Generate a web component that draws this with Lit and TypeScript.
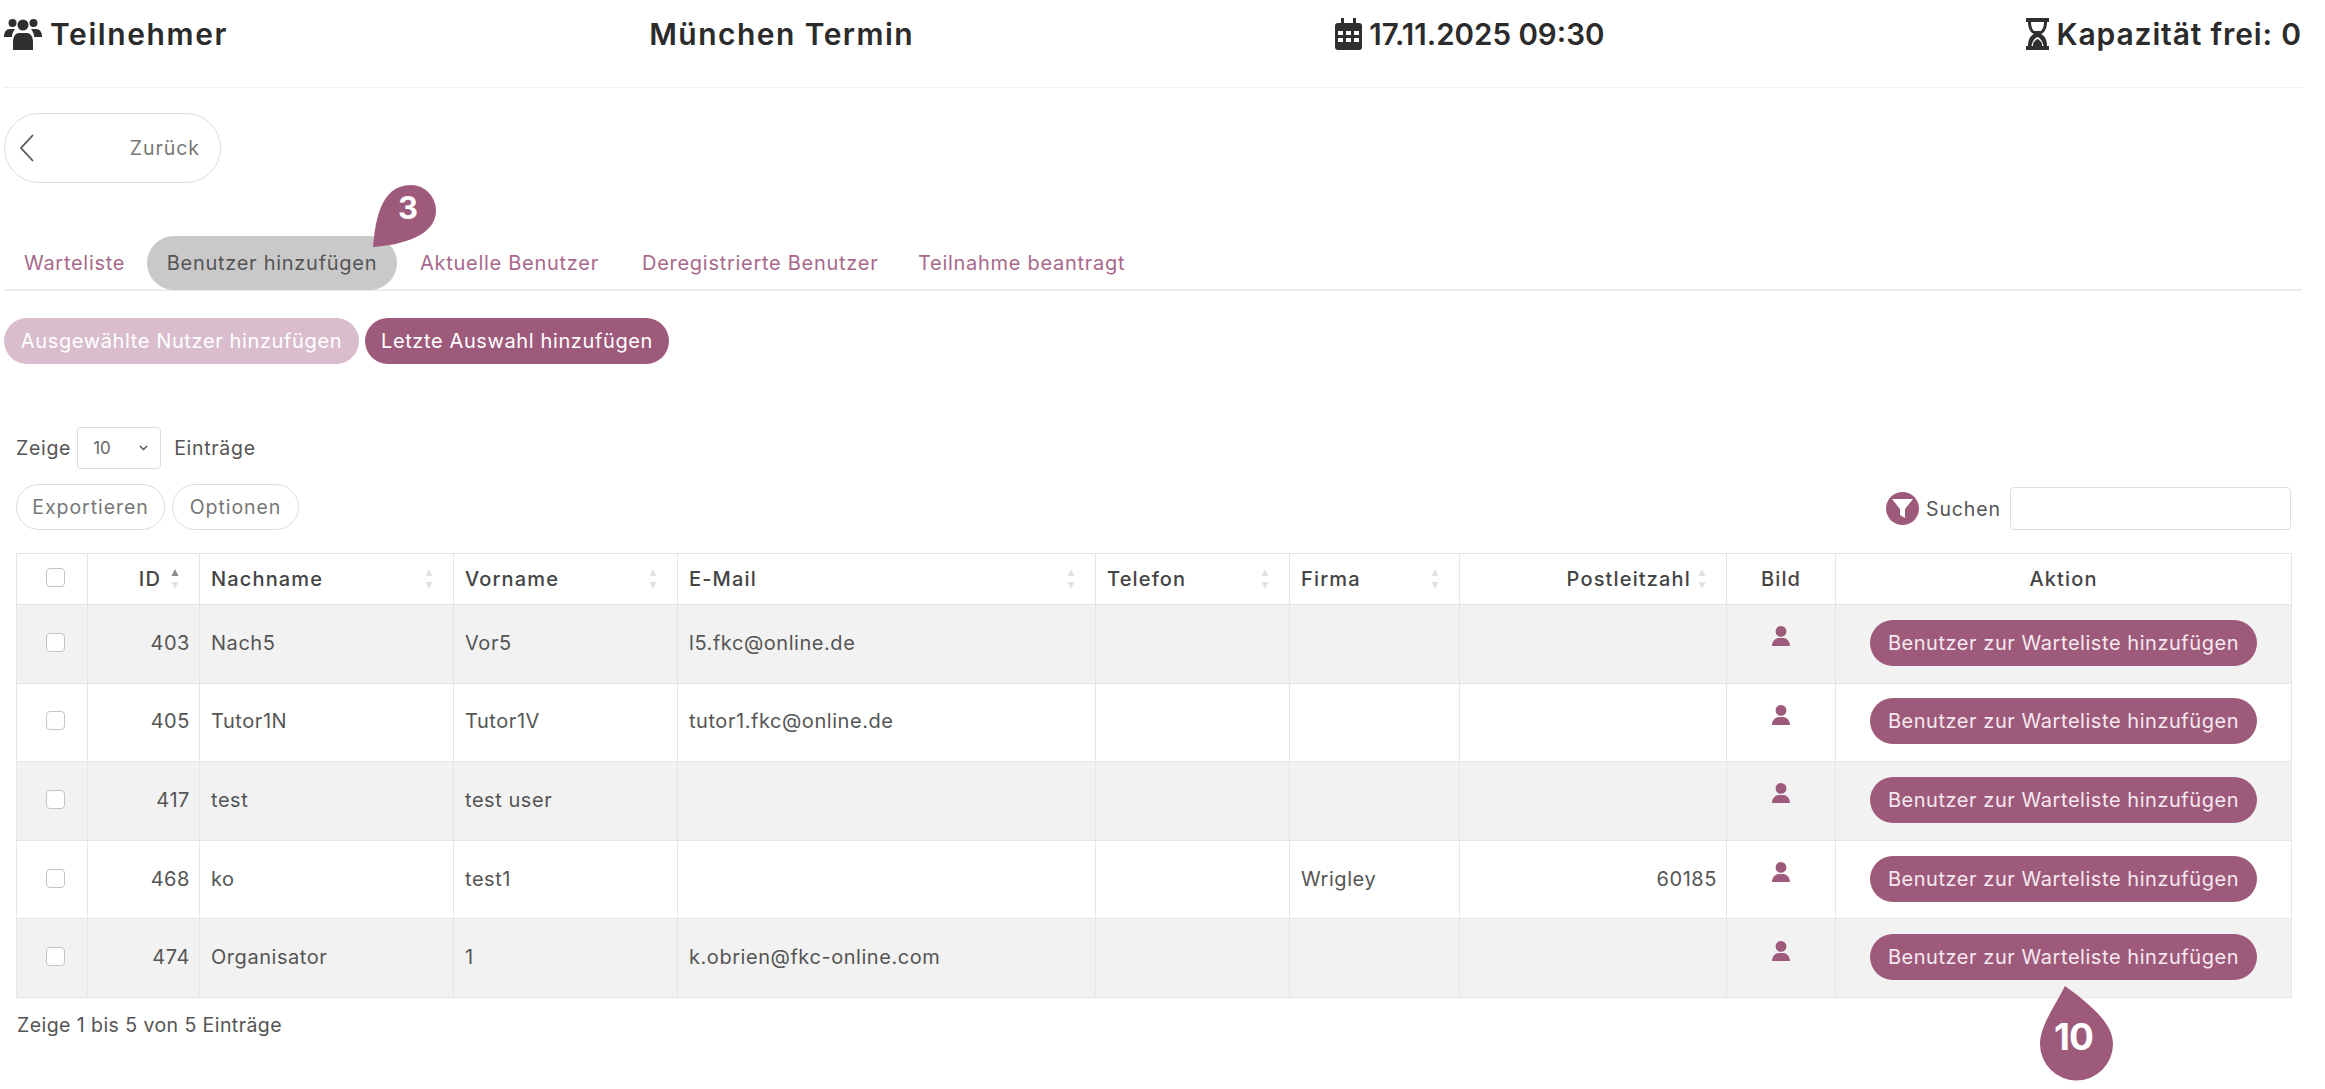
import { LitElement, html, css, svg } from "lit";
import { customElement } from "lit/decorators.js";

const rows = [
  ["403", "Nach5", "Vor5", "l5.fkc@online.de", "", "", ""],
  ["405", "Tutor1N", "Tutor1V", "tutor1.fkc@online.de", "", "", ""],
  ["417", "test", "test user", "", "", "", ""],
  ["468", "ko", "test1", "", "", "Wrigley", "60185"],
  ["474", "Organisator", "1", "k.obrien@fkc-online.com", "", "", ""],
];
const widths = [71, 112, 254, 224, 418, 194, 170, 267, 109, 456];

const sorter = (on = false) => html`<svg class="sort" width="8" height="22" viewBox="0 0 8 22">
  <path d="M4 1 L7.500 8 H.5Z" fill=${on ? "#8a8a8a" : "#e2e2e2"}></path>
  <path d="M4 21 L7.500 14 H.5Z" fill="#e2e2e2"></path>
</svg>`;

const person = svg`<path d="M10 0a5.400 5.400 0 1 1 0 10.800A5.400 5.400 0 0 1 10 0ZM1 20c0-5 3.500-8 7-8h4c3.500 0 7 3 7 8Z"></path>`;

@customElement("app-root")
export class AppRoot extends LitElement {
  static styles = css`
    :host { display: block; background: #fff; font-family: Inter, "Open Sans", sans-serif; color: #555; padding: 0 23px 0 4px; height: 1089px; box-sizing: border-box; overflow: hidden; }
    .top { height: 88px; border-bottom: 1px solid #f0f0f0; display: flex; justify-content: space-between; align-items: center; font-size: 30px; font-weight: 600; color: #2b2b2b; padding-bottom: 19px; box-sizing: border-box; }
    .top > div { display: flex; align-items: center; gap: 7px; }
    .top svg { fill: #2f2f2f; display: block; }
    .t1 { letter-spacing: 1.6px; margin-left: 1px; }
    .t2 { letter-spacing: 1.45px; }
    .t3 { letter-spacing: 0; font-size: 29.500px; }
    .t4 { letter-spacing: .85px; margin-left: 1px; }
    .back { margin-top: 25px; width: 217px; height: 70px; box-sizing: border-box; border: 1px solid #dcdcdc; border-radius: 35px; display: flex; align-items: center; justify-content: space-between; padding: 0 20px 0 13px; font-size: 19.500px; color: #777; letter-spacing: .95px; background: #fff; }
    .tabs { margin-top: 53px; height: 55px; box-sizing: border-box; border-bottom: 2px solid #ececec; display: flex; font-size: 20px; letter-spacing: .72px; color: #a8688c; }
    .tab { height: 53px; display: flex; align-items: center; white-space: nowrap; }
    .tab.first { margin-left: 20px; width: 123px; }
    .tab.active { position: relative; background: #c9c9c9; color: #555; border-radius: 27px; width: 250px; justify-content: center; height: 54px; margin-right: 23px; }
    .tab.a { width: 222px; }
    .tab.d { width: 276px; }
    .drop { position: absolute; display: block; }
    .drop span { position: absolute; color: #fff; font-weight: 700; text-align: center; letter-spacing: 0; }
    .drop svg { display: block; fill: #9e5a7a; }
    .d3 { left: 226px; top: -51px; width: 63px; height: 62px; }
    .d3 span { left: 15px; top: 4px; width: 40px; font-size: 31px; }
    .d10 { left: 170px; top: 52px; width: 73px; height: 95px; }
    .d10 span { left: -3px; top: 40px; width: 73px; font-size: 37px; letter-spacing: -1px; }
    .actions { margin-top: 27px; display: flex; gap: 6px; }
    .pill { height: 46px; box-sizing: border-box; border-radius: 23px; display: flex; align-items: center; justify-content: center; font-size: 20px; letter-spacing: .62px; color: #fff; background: #9e5a7a; white-space: nowrap; }
    .pill.off { background: #d9bdcc; width: 355px; }
    .pill.last { width: 304px; }
    .len { margin: 63px 0 0 12px; display: flex; align-items: center; font-size: 19.500px; letter-spacing: .7px; color: #555; height: 42px; }
    .select { width: 84px; height: 42px; box-sizing: border-box; border: 1px solid #ddd; border-radius: 4px; margin: 0 13px 0 6px; display: flex; align-items: center; justify-content: space-between; padding: 0 12px 0 15px; font-size: 17px; letter-spacing: 0; color: #666; }
    .tools { margin: 15px 0 0 12px; width: 2275px; height: 46px; display: flex; align-items: center; gap: 7px; }
    .ghost { height: 46px; box-sizing: border-box; border: 1px solid #dcdcdc; border-radius: 23px; display: flex; align-items: center; justify-content: center; font-size: 19.500px; letter-spacing: .95px; color: #777; background: #fff; }
    .ghost.a { width: 149px; } .ghost.b { width: 127px; }
    .search { margin-left: auto; display: flex; align-items: center; font-size: 19.500px; letter-spacing: .9px; color: #555; padding-top: 3px; }
    .funnel { width: 33px; height: 33px; border-radius: 50%; background: #9e5a7a; display: flex; align-items: center; justify-content: center; margin-right: 7px; }
    .input { width: 281px; height: 43px; box-sizing: border-box; border: 1px solid #ddd; border-radius: 4px; margin-left: 9px; background: #fff; }
    table { margin: 23px 0 0 12px; border-collapse: collapse; table-layout: fixed; width: 2275px; font-size: 20px; letter-spacing: .55px; color: #555; }
    th, td { border: 1.500px solid #e6e6e6; padding: 0 11px; text-align: left; white-space: nowrap; overflow: visible; }
    th { height: 50px; font-weight: 500; color: #444; letter-spacing: 1.15px; background: #fff; }
    td { height: 77.600px; box-sizing: content-box; line-height: 22px; }
    tbody tr:nth-child(odd) td { background: #f2f2f2; }
    tbody tr:nth-child(even) td { background: #fff; }
    .cb { padding-left: 17px; padding-right: 11px; }
    .hc { display: flex; align-items: center; justify-content: space-between; padding-right: 9px; }
    .hc.r { justify-content: flex-end; gap: 10px; }
    .hc.p { gap: 7px; }
    .num { text-align: right; padding-right: 9px; }
    .ctr { text-align: center; }
    .check { width: 19px; height: 19px; box-sizing: border-box; border: 1.500px solid #c4c4c8; border-radius: 4px; background: #fff; margin: -3px auto 0; }
    .pic { display: block; margin: -15px auto 0; fill: #9e5a7a; }
    .act { position: relative; top: -1px; width: 387px; height: 46px; margin: 0 auto; border-radius: 23px; background: #9e5a7a; color: #f5e9ef; display: flex; align-items: center; justify-content: center; }
    .txt { position: relative; top: -1px; }
    .foot { margin: 15px 0 0 13px; font-size: 19.500px; letter-spacing: .43px; color: #555; }
  `;

  render() {
    return html`
      <div class="top">
        <div>
          <svg width="38" height="32" viewBox="0 0 38 32">
            <circle cx="8.500" cy="5" r="4"></circle><circle cx="29.500" cy="5" r="4"></circle><circle cx="19" cy="7" r="5.500"></circle>
            <path d="M0 19c0-5 2-8 6-8h5c-2.500 3-3 6-3 8ZM38 19c0-5-2-8-6-8h-5c2.500 3 3 6 3 8ZM9 32v-8c0-6 3-9 6-9h8c3 0 6 3 6 9v8Z"></path>
          </svg>
          <span class="t1">Teilnehmer</span>
        </div>
        <div><span class="t2">München Termin</span></div>
        <div>
          <svg width="27" height="32" viewBox="0 0 27 32">
            <path fill-rule="evenodd" d="M6 0h3v5H18V0h3v5h3a3 3 0 0 1 3 3v21a3 3 0 0 1-3 3H3a3 3 0 0 1-3-3V8a3 3 0 0 1 3-3h3ZM3 13v4h5v-4Zm8 0v4h5v-4Zm8 0v4h5v-4ZM3 20v4h5v-4Zm8 0v4h5v-4Zm8 0v4h5v-4Z"></path>
          </svg>
          <span class="t3">17.11.2025 09:30</span>
        </div>
        <div>
          <svg width="23" height="32" viewBox="0 0 23 32">
            <path fill-rule="evenodd" d="M0 0h23v4h-2c0 6-2 10-6 12 4 2 6 6 6 12h2v4H0v-4h2c0-6 2-10 6-12-4-2-6-6-6-12H0ZM5 4c0 4 1 7 3 9h7c2-2 3-5 3-9Zm6.500 15c-3 1.500-5 4-6 9h12c-1-5-3-7.500-6-9Z"></path>
            <path d="M7 25.500c1-2 2.500-3.500 4.500-4.500 2 1 3.500 2.500 4.500 4.500v2.500H7Z"></path>
          </svg>
          <span class="t4">Kapazität frei: 0</span>
        </div>
      </div>

      <div class="back">
        <svg width="18" height="30" viewBox="0 0 18 30"><path d="M15 2 3 15l12 13" fill="none" stroke="#555" stroke-width="1.800"></path></svg>
        <span>Zurück</span>
      </div>

      <div class="tabs">
        <div class="tab first">Warteliste</div>
        <div class="tab active">Benutzer hinzufügen
          <div class="drop d3">
            <svg width="63" height="62" viewBox="0 0 63 62"><path d="M0 62C2 40 6 0 38 0c14 0 25 12 25 26C63 50 30 60 0 62Z"></path></svg>
            <span>3</span>
          </div>
        </div>
        <div class="tab a">Aktuelle Benutzer</div>
        <div class="tab d">Deregistrierte Benutzer</div>
        <div class="tab">Teilnahme beantragt</div>
      </div>

      <div class="actions">
        <div class="pill off">Ausgewählte Nutzer hinzufügen</div>
        <div class="pill last">Letzte Auswahl hinzufügen</div>
      </div>

      <div class="len">
        Zeige
        <div class="select">10
          <svg width="9" height="6" viewBox="0 0 9 6"><path d="M1 1l3.500 3.500L8 1" fill="none" stroke="#555" stroke-width="1.500"></path></svg>
        </div>
        Einträge
      </div>

      <div class="tools">
        <div class="ghost a">Exportieren</div>
        <div class="ghost b">Optionen</div>
        <div class="search">
          <div class="funnel"><svg width="21" height="21" viewBox="0 0 21 21"><path d="M0 1h21l-8 10v9l-5-3v-6Z" fill="#fff"></path></svg></div>
          Suchen
          <div class="input"></div>
        </div>
      </div>

      <table>
        <colgroup>${widths.map((w) => html`<col style="width:${w}px" />`)}</colgroup>
        <thead>
          <tr>
            <th class="cb"><div class="check"></div></th>
            <th><div class="hc r"><span>ID</span>${sorter(true)}</div></th>
            <th><div class="hc"><span>Nachname</span>${sorter()}</div></th>
            <th><div class="hc"><span>Vorname</span>${sorter()}</div></th>
            <th><div class="hc"><span>E-Mail</span>${sorter()}</div></th>
            <th><div class="hc"><span>Telefon</span>${sorter()}</div></th>
            <th><div class="hc"><span>Firma</span>${sorter()}</div></th>
            <th><div class="hc r p"><span>Postleitzahl</span>${sorter()}</div></th>
            <th class="ctr">Bild</th>
            <th class="ctr">Aktion</th>
          </tr>
        </thead>
        <tbody>
          ${rows.map((r, i) => html`<tr>
            <td class="cb"><div class="check"></div></td>
            <td class="num"><span class="txt">${r[0]}</span></td>
            <td><span class="txt">${r[1]}</span></td>
            <td><span class="txt">${r[2]}</span></td>
            <td><span class="txt">${r[3]}</span></td>
            <td><span class="txt">${r[4]}</span></td>
            <td><span class="txt">${r[5]}</span></td>
            <td class="num"><span class="txt">${r[6]}</span></td>
            <td><svg class="pic" width="20" height="20" viewBox="0 0 20 20">${person}</svg></td>
            <td>
              <div class="act">Benutzer zur Warteliste hinzufügen
                ${i === 4 ? html`<div class="drop d10">
                  <svg width="73" height="95" viewBox="0 0 73 95"><path d="M25 0C45 15 73 35 73 58a36.500 36.500 0 0 1-73 0C0 40 15 20 25 0Z"></path></svg>
                  <span>10</span>
                </div>` : ""}
              </div>
            </td>
          </tr>`)}
        </tbody>
      </table>

      <div class="foot">Zeige 1 bis 5 von 5 Einträge</div>
    `;
  }
}
